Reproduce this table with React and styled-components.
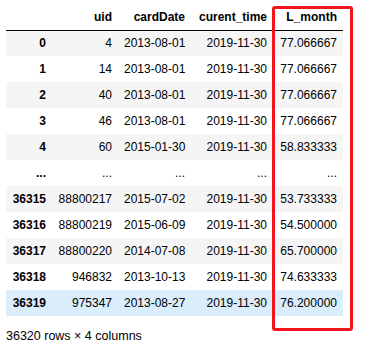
import React from "react";
import styled, { createGlobalStyle } from "styled-components";

const Global = createGlobalStyle`
  html, body { margin: 0; padding: 0; background: #fff; }
  body { font-family: "Liberation Sans", Arial, sans-serif; color: #000; }
`;

const Wrap = styled.div`
  position: relative;
  padding: 4px 0 0 6px;
  width: 363px;
`;

const Table = styled.table`
  border-collapse: collapse;
  border-spacing: 0;
  border: none;
  font-size: 12px;
  table-layout: fixed;
  width: 337px;
`;

const Col = styled.col`
  width: ${(p) => p.$w}px;
`;

const Th = styled.th`
  text-align: right;
  font-weight: bold;
  padding: 0 6px;
  height: 26px;
  line-height: 14px;
  vertical-align: middle;
  white-space: nowrap;
  box-sizing: border-box;
`;

const HeadRow = styled.tr`
  border-bottom: 1px solid #000;
`;

const Row = styled.tr`
  background: ${(p) => (p.$hover ? "#d9edfd" : p.$odd ? "#f5f5f5" : "#fff")};
`;

const Td = styled.td`
  text-align: right;
  padding: 0 6px;
  height: 26px;
  line-height: 14px;
  vertical-align: middle;
  white-space: nowrap;
  box-sizing: border-box;
  font-weight: ${(p) => (p.$index ? "bold" : "normal")};
`;

const Footer = styled.p`
  margin: 13px 0 0 0;
  font-size: 12.5px;
  line-height: 14px;
`;

const Highlight = styled.div`
  position: absolute;
  left: 272px;
  top: 6px;
  width: 81px;
  height: 325px;
  box-sizing: border-box;
  border: 3px solid #f2151b;
  border-radius: 3px;
  pointer-events: none;
`;

const widths = [46, 66, 73, 82, 70];

const rows = [
  ["0", "4", "2013-08-01", "2019-11-30", "77.066667"],
  ["1", "14", "2013-08-01", "2019-11-30", "77.066667"],
  ["2", "40", "2013-08-01", "2019-11-30", "77.066667"],
  ["3", "46", "2013-08-01", "2019-11-30", "77.066667"],
  ["4", "60", "2015-01-30", "2019-11-30", "58.833333"],
  ["...", "...", "...", "...", "..."],
  ["36315", "88800217", "2015-07-02", "2019-11-30", "53.733333"],
  ["36316", "88800219", "2015-06-09", "2019-11-30", "54.500000"],
  ["36317", "88800220", "2014-07-08", "2019-11-30", "65.700000"],
  ["36318", "946832", "2013-10-13", "2019-11-30", "74.633333"],
  ["36319", "975347", "2013-08-27", "2019-11-30", "76.200000"],
];

export default function App() {
  return (
    <>
      <Global />
      <Wrap>
        <Table>
          <colgroup>
            {widths.map((w, i) => (
              <Col key={i} $w={w} />
            ))}
          </colgroup>
          <thead>
            <HeadRow>
              <Th></Th>
              <Th>uid</Th>
              <Th>cardDate</Th>
              <Th>curent_time</Th>
              <Th>L_month</Th>
            </HeadRow>
          </thead>
          <tbody>
            {rows.map((r, i) => (
              <Row key={i} $odd={i % 2 === 0} $hover={i === rows.length - 1}>
                {r.map((c, j) => (
                  <Td key={j} $index={j === 0}>
                    {c}
                  </Td>
                ))}
              </Row>
            ))}
          </tbody>
        </Table>
        <Footer>36320 rows × 4 columns</Footer>
        <Highlight />
      </Wrap>
    </>
  );
}
